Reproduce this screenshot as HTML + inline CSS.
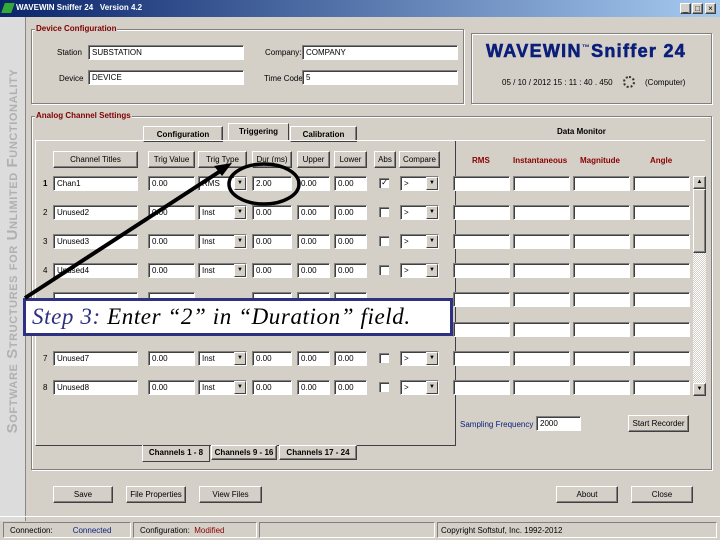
<!DOCTYPE html>
<html><head><style>
*{box-sizing:border-box;margin:0;padding:0}
body{width:720px;height:540px;background:#d4d0c8;font-family:"Liberation Sans",sans-serif;font-size:8px;color:#000;position:relative;overflow:hidden}
.a{position:absolute}
.i{position:absolute;background:#fff;border-top:1px solid #808080;border-left:1px solid #808080;border-bottom:1px solid #fff;border-right:1px solid #fff;box-shadow:inset 1px 1px 0 #404040;height:15px;font-size:8px;padding:2px 0 0 3px;white-space:nowrap;overflow:hidden}
.b{position:absolute;background:#d4d0c8;border-top:1px solid #fff;border-left:1px solid #fff;border-right:1px solid #404040;border-bottom:1px solid #404040;box-shadow:inset -1px -1px 0 #808080;height:17px;font-size:8px;text-align:center;line-height:15px;white-space:nowrap}
.dd{position:absolute;height:15px}
.dd .i{left:0;top:0;width:100%}
.dd .ar{position:absolute;right:1px;top:1px;width:12px;height:13px;background:#d4d0c8;border-top:1px solid #fff;border-left:1px solid #fff;border-right:1px solid #404040;border-bottom:1px solid #404040;font-size:6px;text-align:center;line-height:11px}
.g{position:absolute;border:1px solid #808080;box-shadow:1px 1px 0 #fff,inset 1px 1px 0 #fff}
.gl{position:absolute;background:#d4d0c8;color:#800000;font-weight:bold;font-size:8px;padding:0 1px}
.n{position:absolute;font-size:8px;left:43px}
.cb{position:absolute;left:379px;width:10px;height:10px;background:#fff;border-top:1px solid #808080;border-left:1px solid #808080;box-shadow:inset 1px 1px 0 #404040;font-size:8px;line-height:8px;text-align:center}
.dm{position:absolute;font-weight:bold;color:#8b0000;font-size:8px;top:156px}
</style></head><body>
<!-- sidebar -->
<div class="a" style="left:0;top:16px;width:26px;height:505px;background:#dcdcdc;border-right:1px solid #888"></div>
<div class="a" style="left:13px;top:251px;width:400px;margin-left:-200px;margin-top:-9px;height:18px;transform:rotate(-90deg);text-align:center;color:#b0b0b0;font-weight:bold;font-size:15px;font-variant:small-caps;letter-spacing:0.6px;white-space:nowrap">Software Structures for Unlimited Functionality</div>
<!-- title bar -->
<div class="a" style="left:0;top:0;width:720px;height:17px;background:linear-gradient(90deg,#0a246a,#a6caf0);color:#fff;font-weight:bold;font-size:8px;line-height:16px;padding-left:16px">WAVEWIN Sniffer 24 &nbsp; Version 4.2</div>
<div class="a" style="left:3px;top:3px;width:10px;height:10px;background:#3a3;transform:skewX(-20deg)"></div>
<div class="b" style="left:680px;top:3px;width:11px;height:11px;line-height:9px">_</div>
<div class="b" style="left:692px;top:3px;width:11px;height:11px;line-height:9px">□</div>
<div class="b" style="left:705px;top:3px;width:11px;height:11px;line-height:9px">×</div>
<!-- device config -->
<div class="g" style="left:31px;top:29px;width:433px;height:75px"></div>
<div class="gl" style="left:35px;top:24px">Device Configuration</div>
<div class="a" style="left:57px;top:48px">Station</div>
<div class="i" style="left:88px;top:45px;width:156px">SUBSTATION</div>
<div class="a" style="left:59px;top:74px">Device</div>
<div class="i" style="left:88px;top:70px;width:156px">DEVICE</div>
<div class="a" style="left:265px;top:48px">Company:</div>
<div class="i" style="left:302px;top:45px;width:156px">COMPANY</div>
<div class="a" style="left:264px;top:74px">Time Code:</div>
<div class="i" style="left:302px;top:70px;width:156px">5</div>
<!-- logo box -->
<div class="g" style="left:471px;top:33px;width:241px;height:71px"></div>
<div class="a" style="left:486px;top:41px;font-weight:bold;font-size:18px;color:#0a1e7a;letter-spacing:1.3px;white-space:nowrap;-webkit-text-stroke:0.6px #0a1e7a">WAVEWIN<sup style="font-size:8px;-webkit-text-stroke:0">™</sup>Sniffer 24</div>
<div class="a" style="left:502px;top:78px;white-space:nowrap">05 / 10 / 2012 15 : 11 : 40 . 450</div>
<div class="a" style="left:623px;top:76px;width:12px;height:12px;border:2px dotted #333;border-radius:50%"></div>
<div class="a" style="left:645px;top:78px">(Computer)</div>
<!-- analog -->
<div class="g" style="left:31px;top:116px;width:681px;height:354px"></div>
<div class="gl" style="left:35px;top:111px">Analog Channel Settings</div>
<div class="b" style="left:143px;top:126px;width:80px;height:16px;font-weight:bold">Configuration</div>
<div class="a" style="left:228px;top:123px;width:61px;height:18px;border-top:1px solid #fff;border-left:1px solid #fff;border-right:1px solid #404040;text-align:center;font-weight:bold;line-height:16px">Triggering</div>
<div class="b" style="left:290px;top:126px;width:67px;height:16px;font-weight:bold">Calibration</div>
<div class="a" style="left:35px;top:140px;width:421px;height:306px;border-top:1px solid #fff;border-left:1px solid #fff;border-right:1px solid #404040;border-bottom:1px solid #404040"></div>
<div class="a" style="left:557px;top:127px;font-weight:bold">Data Monitor</div>
<div class="a" style="left:455px;top:140px;width:250px;height:1px;background:#fff"></div>
<!-- headers -->
<div class="b" style="left:53px;top:151px;width:85px">Channel Titles</div>
<div class="b" style="left:148px;top:151px;width:47px">Trig Value</div>
<div class="b" style="left:198px;top:151px;width:49px">Trig Type</div>
<div class="b" style="left:252px;top:151px;width:40px">Dur (ms)</div>
<div class="b" style="left:297px;top:151px;width:33px">Upper</div>
<div class="b" style="left:334px;top:151px;width:33px">Lower</div>
<div class="b" style="left:374px;top:151px;width:22px">Abs</div>
<div class="b" style="left:399px;top:151px;width:41px">Compare</div>
<div class="dm" style="left:472px">RMS</div>
<div class="dm" style="left:513px">Instantaneous</div>
<div class="dm" style="left:580px">Magnitude</div>
<div class="dm" style="left:650px">Angle</div>

<!-- rows -->
<div class="n" style="top:179px;font-weight:bold">1</div><div class="i" style="left:53px;top:176px;width:85px">Chan1</div><div class="i" style="left:148px;top:176px;width:47px">0.00</div><div class="dd" style="left:198px;top:176px;width:49px"><div class="i">RMS</div><div class="ar">▼</div></div><div class="i" style="left:252px;top:176px;width:40px">2.00</div><div class="i" style="left:297px;top:176px;width:33px">0.00</div><div class="i" style="left:334px;top:176px;width:33px">0.00</div><div class="cb" style="top:178px">✓</div><div class="dd" style="left:400px;top:176px;width:39px"><div class="i">&gt;</div><div class="ar">▼</div></div>
<div class="n" style="top:208px">2</div><div class="i" style="left:53px;top:205px;width:85px">Unused2</div><div class="i" style="left:148px;top:205px;width:47px">0.00</div><div class="dd" style="left:198px;top:205px;width:49px"><div class="i">Inst</div><div class="ar">▼</div></div><div class="i" style="left:252px;top:205px;width:40px">0.00</div><div class="i" style="left:297px;top:205px;width:33px">0.00</div><div class="i" style="left:334px;top:205px;width:33px">0.00</div><div class="cb" style="top:207px"></div><div class="dd" style="left:400px;top:205px;width:39px"><div class="i">&gt;</div><div class="ar">▼</div></div>
<div class="n" style="top:237px">3</div><div class="i" style="left:53px;top:234px;width:85px">Unused3</div><div class="i" style="left:148px;top:234px;width:47px">0.00</div><div class="dd" style="left:198px;top:234px;width:49px"><div class="i">Inst</div><div class="ar">▼</div></div><div class="i" style="left:252px;top:234px;width:40px">0.00</div><div class="i" style="left:297px;top:234px;width:33px">0.00</div><div class="i" style="left:334px;top:234px;width:33px">0.00</div><div class="cb" style="top:236px"></div><div class="dd" style="left:400px;top:234px;width:39px"><div class="i">&gt;</div><div class="ar">▼</div></div>
<div class="n" style="top:266px">4</div><div class="i" style="left:53px;top:263px;width:85px">Unused4</div><div class="i" style="left:148px;top:263px;width:47px">0.00</div><div class="dd" style="left:198px;top:263px;width:49px"><div class="i">Inst</div><div class="ar">▼</div></div><div class="i" style="left:252px;top:263px;width:40px">0.00</div><div class="i" style="left:297px;top:263px;width:33px">0.00</div><div class="i" style="left:334px;top:263px;width:33px">0.00</div><div class="cb" style="top:265px"></div><div class="dd" style="left:400px;top:263px;width:39px"><div class="i">&gt;</div><div class="ar">▼</div></div>
<div class="i" style="left:53px;top:292px;width:85px"></div><div class="i" style="left:148px;top:292px;width:47px"></div><div class="i" style="left:252px;top:292px;width:40px"></div><div class="i" style="left:297px;top:292px;width:33px"></div><div class="i" style="left:334px;top:292px;width:33px"></div>
<div class="n" style="top:354px">7</div><div class="i" style="left:53px;top:351px;width:85px">Unused7</div><div class="i" style="left:148px;top:351px;width:47px">0.00</div><div class="dd" style="left:198px;top:351px;width:49px"><div class="i">Inst</div><div class="ar">▼</div></div><div class="i" style="left:252px;top:351px;width:40px">0.00</div><div class="i" style="left:297px;top:351px;width:33px">0.00</div><div class="i" style="left:334px;top:351px;width:33px">0.00</div><div class="cb" style="top:353px"></div><div class="dd" style="left:400px;top:351px;width:39px"><div class="i">&gt;</div><div class="ar">▼</div></div>
<div class="n" style="top:383px">8</div><div class="i" style="left:53px;top:380px;width:85px">Unused8</div><div class="i" style="left:148px;top:380px;width:47px">0.00</div><div class="dd" style="left:198px;top:380px;width:49px"><div class="i">Inst</div><div class="ar">▼</div></div><div class="i" style="left:252px;top:380px;width:40px">0.00</div><div class="i" style="left:297px;top:380px;width:33px">0.00</div><div class="i" style="left:334px;top:380px;width:33px">0.00</div><div class="cb" style="top:382px"></div><div class="dd" style="left:400px;top:380px;width:39px"><div class="i">&gt;</div><div class="ar">▼</div></div>

<!-- data monitor boxes -->
<div class="i" style="left:453px;top:176px;width:57px"></div><div class="i" style="left:513px;top:176px;width:57px"></div><div class="i" style="left:573px;top:176px;width:57px"></div><div class="i" style="left:633px;top:176px;width:57px"></div>
<div class="i" style="left:453px;top:205px;width:57px"></div><div class="i" style="left:513px;top:205px;width:57px"></div><div class="i" style="left:573px;top:205px;width:57px"></div><div class="i" style="left:633px;top:205px;width:57px"></div>
<div class="i" style="left:453px;top:234px;width:57px"></div><div class="i" style="left:513px;top:234px;width:57px"></div><div class="i" style="left:573px;top:234px;width:57px"></div><div class="i" style="left:633px;top:234px;width:57px"></div>
<div class="i" style="left:453px;top:263px;width:57px"></div><div class="i" style="left:513px;top:263px;width:57px"></div><div class="i" style="left:573px;top:263px;width:57px"></div><div class="i" style="left:633px;top:263px;width:57px"></div>
<div class="i" style="left:453px;top:292px;width:57px"></div><div class="i" style="left:513px;top:292px;width:57px"></div><div class="i" style="left:573px;top:292px;width:57px"></div><div class="i" style="left:633px;top:292px;width:57px"></div>
<div class="i" style="left:453px;top:322px;width:57px"></div><div class="i" style="left:513px;top:322px;width:57px"></div><div class="i" style="left:573px;top:322px;width:57px"></div><div class="i" style="left:633px;top:322px;width:57px"></div>
<div class="i" style="left:453px;top:351px;width:57px"></div><div class="i" style="left:513px;top:351px;width:57px"></div><div class="i" style="left:573px;top:351px;width:57px"></div><div class="i" style="left:633px;top:351px;width:57px"></div>
<div class="i" style="left:453px;top:380px;width:57px"></div><div class="i" style="left:513px;top:380px;width:57px"></div><div class="i" style="left:573px;top:380px;width:57px"></div><div class="i" style="left:633px;top:380px;width:57px"></div>
<!-- scrollbar -->
<div class="a" style="left:693px;top:176px;width:13px;height:220px;background:repeating-conic-gradient(#fff 0 25%,#d4d0c8 0 50%) 0 0/2px 2px"></div>
<div class="b" style="left:693px;top:176px;width:13px;height:13px;font-size:6px;line-height:11px">▲</div>
<div class="b" style="left:693px;top:189px;width:13px;height:64px"></div>
<div class="b" style="left:693px;top:383px;width:13px;height:13px;font-size:6px;line-height:11px">▼</div>
<!-- bottom tabs -->
<div class="a" style="left:142px;top:445px;width:68px;height:17px;border-left:1px solid #fff;border-right:1px solid #404040;border-bottom:1px solid #404040;font-weight:bold;text-align:center;line-height:16px">Channels 1 - 8</div>
<div class="b" style="left:211px;top:445px;width:66px;height:15px;font-weight:bold;line-height:13px">Channels 9 - 16</div>
<div class="b" style="left:279px;top:445px;width:78px;height:15px;font-weight:bold;line-height:13px">Channels 17 - 24</div>
<div class="a" style="left:460px;top:420px;color:#0a1e7a">Sampling Frequency</div>
<div class="i" style="left:536px;top:416px;width:45px">2000</div>
<div class="b" style="left:628px;top:415px;width:61px">Start Recorder</div>
<!-- buttons -->
<div class="b" style="left:53px;top:486px;width:60px">Save</div>
<div class="b" style="left:126px;top:486px;width:60px">File Properties</div>
<div class="b" style="left:199px;top:486px;width:63px">View Files</div>
<div class="b" style="left:556px;top:486px;width:62px">About</div>
<div class="b" style="left:631px;top:486px;width:62px">Close</div>
<!-- status bar -->
<div class="a" style="left:0;top:516px;width:720px;height:24px;border-top:1px solid #fff"></div>
<div class="a" style="left:3px;top:522px;width:128px;height:16px;border:1px solid;border-color:#808080 #fff #fff #808080;padding:3px 0 0 6px;white-space:nowrap">Connection: &nbsp; &nbsp; &nbsp; &nbsp; <span style="color:#0a1e7a">Connected</span></div>
<div class="a" style="left:133px;top:522px;width:124px;height:16px;border:1px solid;border-color:#808080 #fff #fff #808080;padding:3px 0 0 6px;white-space:nowrap">Configuration: &nbsp;<span style="color:#8b0000">Modified</span></div>
<div class="a" style="left:259px;top:522px;width:176px;height:16px;border:1px solid;border-color:#808080 #fff #fff #808080"></div>
<div class="a" style="left:437px;top:522px;width:280px;height:16px;border:1px solid;border-color:#808080 #fff #fff #808080;padding:3px 0 0 3px;white-space:nowrap">Copyright Softstuf, Inc. 1992-2012</div>
<!-- callout -->
<div class="a" style="left:23px;top:298px;width:430px;height:38px;background:#fff;border:3px solid #2e3080;font-family:'Liberation Serif',serif;font-style:italic;font-size:23px;letter-spacing:0.6px;line-height:32px;padding-left:6px;white-space:nowrap;overflow:hidden"><span style="color:#2e3080">Step 3:</span> Enter “2” in “Duration” field.</div>
<svg class="a" style="left:0;top:0" width="720" height="540">
<line x1="25" y1="298" x2="222" y2="170" stroke="#000" stroke-width="4"/>
<polygon points="232,163 214,166 222,176" fill="#000"/>
<ellipse cx="264" cy="184" rx="35" ry="20" fill="none" stroke="#000" stroke-width="3.5"/>
</svg>
</body></html>
